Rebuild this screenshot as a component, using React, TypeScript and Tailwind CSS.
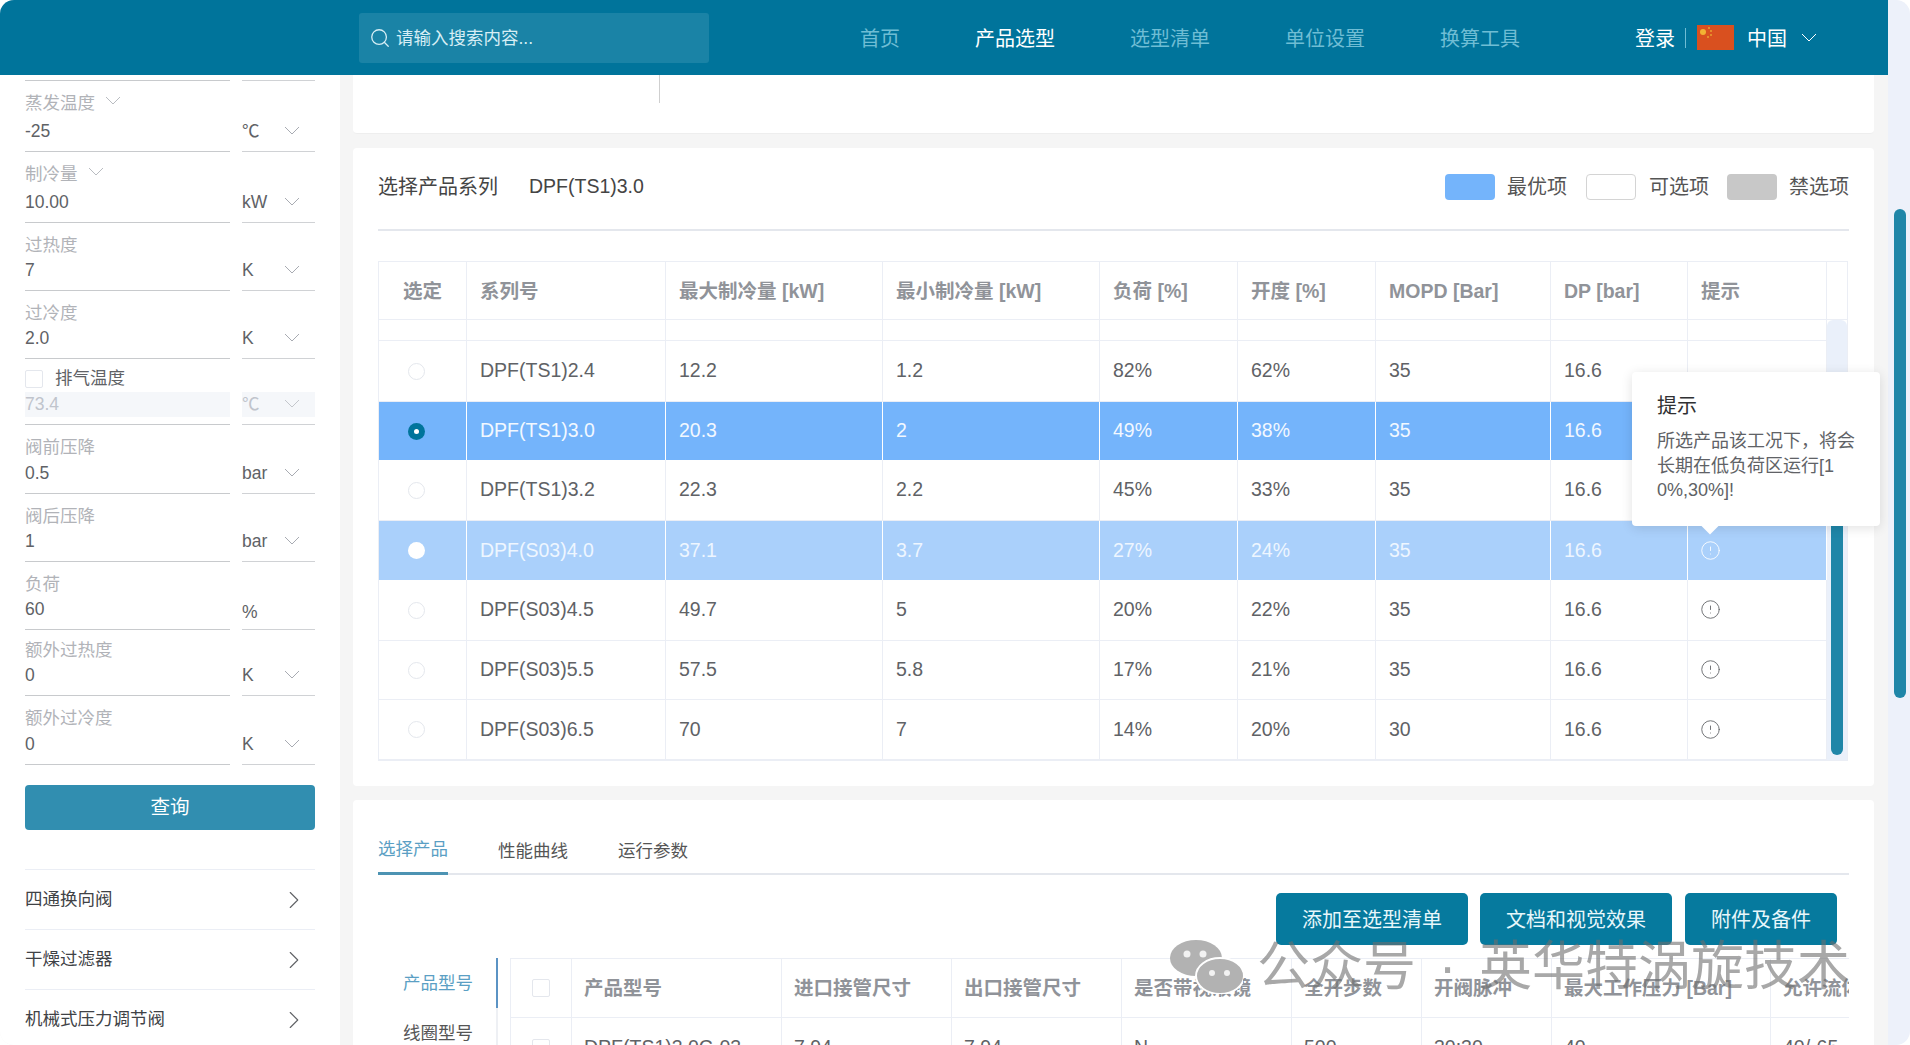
import { ChevronRight, CircleAlert, Search } from 'lucide-react';

const fields = [
  { label: '蒸发温度', value: '-25', unit: '℃', height: 'h-[71px]', labelMenu: true },
  { label: '制冷量', value: '10.00', unit: 'kW', height: 'h-[71px]', labelMenu: true },
  { label: '过热度', value: '7', unit: 'K', height: 'h-[68px]' },
  { label: '过冷度', value: '2.0', unit: 'K', height: 'h-[68px]' },
];

const fieldsAfter = [
  { label: '阀前压降', value: '0.5', unit: 'bar', height: 'h-[69px]' },
  { label: '阀后压降', value: '1', unit: 'bar', height: 'h-[68px]' },
  { label: '负荷', value: '60', unit: '%', height: 'h-[66px]', noMenu: true },
  { label: '额外过热度', value: '0', unit: 'K', height: 'h-[68px]' },
  { label: '额外过冷度', value: '0', unit: 'K', height: 'h-[69px]' },
];

const navLinks = ['首页', '产品选型', '选型清单', '单位设置', '换算工具'];

const seriesCols = 'grid grid-cols-[88px_199px_217px_217px_138px_138px_175px_137px_139px]';

const seriesRows = [
  { name: 'DPF(TS1)2.4', max: '12.2', min: '1.2', load: '82%', open: '62%', mopd: '35', height: 'h-[61px]' },
  { name: 'DPF(TS1)3.0', max: '20.3', min: '2', load: '49%', open: '38%', mopd: '35', height: 'h-[58px]', state: 'selected' },
  { name: 'DPF(TS1)3.2', max: '22.3', min: '2.2', load: '45%', open: '33%', mopd: '35', height: 'h-[61px]' },
  { name: 'DPF(S03)4.0', max: '37.1', min: '3.7', load: '27%', open: '24%', mopd: '35', height: 'h-[59px]', state: 'hover', tip: true },
  { name: 'DPF(S03)4.5', max: '49.7', min: '5', load: '20%', open: '22%', mopd: '35', height: 'h-[61px]', tip: true },
  { name: 'DPF(S03)5.5', max: '57.5', min: '5.8', load: '17%', open: '21%', mopd: '35', height: 'h-[59px]', tip: true },
  { name: 'DPF(S03)6.5', max: '70', min: '7', load: '14%', open: '20%', mopd: '30', height: 'h-[60px]', tip: true },
];

const productCols = 'grid grid-cols-[61px_210px_170px_170px_170px_130px_130px_219px_130px]';

const productHead = ['产品型号', '进口接管尺寸', '出口接管尺寸', '是否带视液镜', '全开步数', '开阀脉冲', '最大工作压力 [Bar]', '允许流体'];
const productRow = ['DPF(TS1)3.0C-03', '7.94', '7.94', 'N', '500', '30:30', '40', '40/-65'];

function Caret({ className }: { className: string }) {
  return (
    <svg width="16" height="9" viewBox="0 0 16 9" fill="none" className={className}>
      <polyline points="1,1 8,8 15,1" stroke="currentColor" strokeWidth="1" />
    </svg>
  );
}

function Field({ item }: { item: { label: string; value: string; unit: string; height: string; labelMenu?: boolean; noMenu?: boolean } }) {
  return (
    <div className={`${item.height} flex flex-col justify-between`}>
      <div className="flex items-center pt-[10px] h-[34px] text-[17.5px] leading-[24px] text-[#b1b3b8]">
        {item.label}
        {item.labelMenu && <Caret className="ml-[10px] -mt-[6px] text-[#b9bcc1]" />}
      </div>
      <div className="flex gap-3">
        <div className="w-[205px] h-[34px] border-b border-[#c8cacd] leading-[26px] text-[17.5px] text-[#606266]">{item.value}</div>
        <div className="w-[73px] h-[34px] border-b border-[#d0d2d5] flex justify-between pr-[15px] leading-[26px] text-[17.5px] text-[#606266]">
          <span className={item.noMenu ? 'pt-[3px]' : ''}>{item.unit}</span>
          {!item.noMenu && <span className="pt-[8px]"><Caret className="text-[#a8abb2]" /></span>}
        </div>
      </div>
    </div>
  );
}

function Sidebar() {
  return (
    <aside className="w-[340px] shrink-0 bg-white pl-[25px] pt-[5px]">
      <div className="w-[290px]">
        <div className="flex gap-3 h-px">
          <div className="w-[205px] bg-[#c8cacd]" />
          <div className="w-[73px] bg-[#d0d2d5]" />
        </div>
        {fields.map((f) => <Field key={f.label} item={f} />)}

        {/* 排气温度 is switched off, so its inputs are greyed */}
        <div className="h-[66px] flex flex-col justify-between">
          <div className="flex items-center gap-3 pt-[9px] h-[30px] text-[17.5px] text-[#606266]">
            <span className="w-[18px] h-[18px] border border-[#e4e7ed] rounded-[2px] bg-white" />
            排气温度
          </div>
          <div className="flex gap-3">
            <div className="w-[205px] h-[33px] border-b border-[#c8cacd]">
              <div className="h-[25px] bg-[#f5f7fa] leading-[25px] text-[17.5px] text-[#c0c4cc]">73.4</div>
            </div>
            <div className="w-[73px] h-[33px] border-b border-[#d0d2d5]">
              <div className="h-[25px] bg-[#f5f7fa] flex justify-between pr-[15px] leading-[25px] text-[17.5px] text-[#c0c4cc]">
                ℃
                <span className="pt-[7px]"><Caret className="text-[#c4c7cc]" /></span>
              </div>
            </div>
          </div>
        </div>

        {fieldsAfter.map((f) => <Field key={f.label} item={f} />)}

        <button className="mt-[20px] w-[290px] h-[45px] rounded-[4px] bg-[#318eb0] text-white text-[19.5px]">查询</button>

        <div className="mt-[39px]">
          {['四通换向阀', '干燥过滤器', '机械式压力调节阀'].map((name) => (
            <div key={name} className="h-[60px] border-t border-[#ebeef5] flex items-center justify-between pr-[6px] text-[17.5px] text-[#404246]">
              {name}
              <ChevronRight size={30} strokeWidth={0.9} className="text-[#606266]" />
            </div>
          ))}
        </div>
      </div>
    </aside>
  );
}

function Header() {
  return (
    <header className="h-[75px] shrink-0 bg-[#00749b] flex items-center pl-[359px]">
      <div className="w-[350px] h-[50px] rounded-[3px] bg-[#1a83a6] flex items-center pl-[10px] gap-[5px] text-[17.5px] text-[#d6eef5]">
        <Search size={22} strokeWidth={1.4} />
        <span className="pt-[2px]">请输入搜索内容...</span>
      </div>
      <nav className="ml-[151px] flex gap-[75px] pt-[2px] text-[20px]">
        {navLinks.map((link) => (
          <span key={link} className={link === '产品选型' ? 'text-white' : 'text-[#6fbdd4]'}>{link}</span>
        ))}
      </nav>
      <span className="ml-[115px] pt-[2px] text-[20px] text-white">登录</span>
      <span className="ml-[10px] w-px h-[20px] bg-[#6fbdd4]" />
      <svg className="ml-[11px]" width="37" height="25" viewBox="0 0 37 25">
        <rect width="37" height="25" fill="#d9501f" />
        <circle cx="6" cy="7" r="3" fill="#f2b233" />
        <circle cx="12" cy="3" r="1" fill="#e8a030" />
        <circle cx="14" cy="6" r="1" fill="#e8a030" />
        <circle cx="14" cy="10" r="1" fill="#e8a030" />
        <circle cx="11" cy="12" r="1" fill="#e8a030" />
      </svg>
      <span className="ml-[13px] pt-[2px] text-[20px] text-white">中国</span>
      <Caret className="ml-[14px] text-white" />
    </header>
  );
}

function Radio({ state }: { state?: string }) {
  if (state === 'selected') {
    return (
      <span className="w-[17px] h-[17px] rounded-full bg-[#00749b] flex items-center justify-center">
        <span className="w-[5px] h-[5px] rounded-full bg-white" />
      </span>
    );
  }
  if (state === 'hover') return <span className="w-[17px] h-[17px] rounded-full bg-white" />;
  return <span className="w-[17px] h-[17px] rounded-full bg-white border border-[#e4e7ed]" />;
}

function SeriesTable() {
  const headCell = 'border-r border-[#ebeef5] pl-[13px] pt-[2px] flex items-center';
  return (
    <div className="mt-[30px] w-[1470px] border-t border-r border-l border-b border-[#ebeef5] text-[19.5px]">
      <div className="flex h-[58px] border-b border-[#ebeef5] font-bold text-[#909399]">
        <div className={`${seriesCols} w-[1448px]`}>
          <div className="border-r border-[#ebeef5] pl-[24px] pt-[2px] flex items-center">选定</div>
          <div className={headCell}>系列号</div>
          <div className={headCell}>最大制冷量 [kW]</div>
          <div className={headCell}>最小制冷量 [kW]</div>
          <div className={headCell}>负荷 [%]</div>
          <div className={headCell}>开度 [%]</div>
          <div className={headCell}>MOPD [Bar]</div>
          <div className={headCell}>DP [bar]</div>
          <div className={headCell}>提示</div>
        </div>
      </div>
      <div className="flex">
        <div className="w-[1448px] text-[#606266]">
          <div className={`${seriesCols} h-[21px] border-b border-[#ebeef5]`}>
            {Array.from({ length: 9 }, (_, i) => <div key={i} className="border-r border-[#ebeef5]" />)}
          </div>
          {seriesRows.map((row) => {
            const tone =
              row.state === 'selected'
                ? 'bg-[#74b4fb] text-[#f2f8ff]'
                : row.state === 'hover'
                  ? 'bg-[#aad0fb] text-[#eef6ff]'
                  : 'border-b border-[#ebeef5]';
            const cell = row.state ? 'border-r border-white pl-[13px] flex items-center' : 'border-r border-[#ebeef5] pl-[13px] flex items-center';
            return (
              <div key={row.name} className={`${seriesCols} ${row.height} ${tone}`}>
                <div className={`${cell} !pl-[29px]`}><Radio state={row.state} /></div>
                <div className={cell}>{row.name}</div>
                <div className={cell}>{row.max}</div>
                <div className={cell}>{row.min}</div>
                <div className={cell}>{row.load}</div>
                <div className={cell}>{row.open}</div>
                <div className={cell}>{row.mopd}</div>
                <div className={cell}>16.6</div>
                <div className={cell}>
                  {row.tip && <CircleAlert size={21} strokeWidth={1} className={row.state === 'hover' ? '-ml-px -mt-px text-white' : '-ml-px -mt-px text-[#606266]'} />}
                </div>
              </div>
            );
          })}
        </div>
        {/* table scrollbar */}
        <div className="w-[20px] bg-[#eaf0fa] rounded-t-[6px] pl-[4px]">
          <div className="mt-[180px] w-[12px] h-[255px] rounded-full bg-[#1f86a8]" />
        </div>
      </div>
    </div>
  );
}

function Popover() {
  return (
    <div className="absolute left-[1279px] top-[224px] w-[248px] h-[154px] bg-white rounded-[4px] shadow-[0_2px_12px_rgba(0,0,0,0.12)] p-[25px] pt-[22px]">
      <div className="text-[20px] leading-[24px] text-[#303133]">提示</div>
      <div className="mt-[11px] text-[18px] leading-[24.5px] text-[#606266] break-all">所选产品该工况下，将会长期在低负荷区运行[10%,30%]!</div>
      <span className="absolute left-[72px] -bottom-[6px] w-[12px] h-[12px] rotate-45 bg-white" />
    </div>
  );
}

function ProductArea() {
  return (
    <div className="mt-[13px] flex h-[87px] overflow-hidden">
      <div className="w-[120px] shrink-0 border-r-2 border-[#eef0f4] text-right text-[17.5px]">
        <div className="relative h-[50px] pr-[23px] leading-[50px] text-[#5b9fc4]">
          产品型号
          <span className="absolute -right-[2px] top-0 w-[2px] h-[50px] bg-[#5b93c4]" />
        </div>
        <div className="h-[50px] pr-[23px] leading-[50px] text-[#555]">线圈型号</div>
      </div>
      <div className="ml-[12px] w-[1339px] overflow-hidden border-t border-l border-[#ebeef5] text-[19.5px]">
        <div className="w-[1500px]">
          <div className={`${productCols} h-[59px] border-b border-[#ebeef5] font-bold text-[#909399]`}>
            <div className="border-r border-[#ebeef5] flex items-center justify-center">
              <span className="w-[18px] h-[18px] border border-[#e4e7ed] rounded-[2px]" />
            </div>
            {productHead.map((h) => (
              <div key={h} className="border-r border-[#ebeef5] pl-[12px] pt-[2px] flex items-center whitespace-nowrap">{h}</div>
            ))}
          </div>
          <div className={`${productCols} h-[60px] text-[#606266]`}>
            <div className="border-r border-[#ebeef5] flex items-center justify-center">
              <span className="w-[18px] h-[18px] border border-[#e4e7ed] rounded-[2px]" />
            </div>
            {productRow.map((v, i) => (
              <div key={i} className="border-r border-[#ebeef5] pl-[12px] flex items-center whitespace-nowrap">{v}</div>
            ))}
          </div>
        </div>
      </div>
    </div>
  );
}

function Watermark() {
  return (
    <div className="absolute left-[1170px] top-[939px] h-[56px] flex items-center pointer-events-none text-[53px] leading-[56px] whitespace-pre text-[rgba(110,110,110,0.6)]">
      <svg width="73" height="54" viewBox="0 0 73 54" className="mr-[14px]">
        <ellipse cx="26" cy="18" rx="26" ry="18" fill="#b2b2b2" />
        <ellipse cx="50" cy="36" rx="24" ry="18" fill="#b2b2b2" stroke="#fff" strokeWidth="2" />
        <circle cx="17" cy="14" r="3.5" fill="#f2f2f2" />
        <circle cx="33" cy="14" r="3.5" fill="#f2f2f2" />
        <circle cx="42" cy="33" r="3" fill="#f2f2f2" />
        <circle cx="57" cy="33" r="3" fill="#f2f2f2" />
      </svg>
      公众号 <span className="mx-[8px]">·</span> 英华特涡旋技术
    </div>
  );
}

export default function App() {
  return (
    <div className="relative w-[1910px] h-[1045px] flex overflow-hidden rounded-[14px] font-['Liberation_Sans','Noto_Sans_CJK_SC',sans-serif]">
      <div className="w-[1888px] flex flex-col bg-[#f5f5f5]">
        <Header />
        <div className="flex flex-1 min-h-0">
          <Sidebar />
          <main className="flex-1 pl-[13px] pr-[15px]">
            <section className="h-[59px] bg-white rounded-b-[4px] border-b border-[#eeeeee] pl-[306px]">
              <div className="w-px h-[28px] bg-[#cfcfcf]" />
            </section>

            <section className="relative mt-[14px] h-[638px] bg-white rounded-[4px] px-[25px]">
              <div className="h-[83px] border-b-2 border-[#e4e7ed] flex items-center pb-[3px] text-[#444]">
                <span className="text-[20px]">选择产品系列</span>
                <span className="ml-[31px] text-[19.5px]">DPF(TS1)3.0</span>
                <div className="ml-auto flex items-center text-[20px] text-[#555]">
                  <span className="w-[50px] h-[26px] rounded-[4px] bg-[#74b4fb]" />
                  <span className="ml-[12px]">最优项</span>
                  <span className="ml-[19px] w-[50px] h-[26px] rounded-[4px] bg-white border border-[#d4d4d4]" />
                  <span className="ml-[13px]">可选项</span>
                  <span className="ml-[18px] w-[50px] h-[26px] rounded-[4px] bg-[#c8c8c8]" />
                  <span className="ml-[12px]">禁选项</span>
                </div>
              </div>
              <SeriesTable />
              <Popover />
            </section>

            <section className="mt-[14px] h-[245px] bg-white rounded-t-[4px] px-[25px] overflow-hidden">
              <div className="h-[75px] border-b-2 border-[#e4e7ed] flex gap-[50px] text-[17.5px] text-[#555]">
                <div className="w-[70px] h-[75px] pt-[27px] flex items-center border-b-[3px] border-[#4d93b3] text-[#5b9fc4]">选择产品</div>
                <div className="h-[75px] pt-[27px] flex items-center">性能曲线</div>
                <div className="h-[75px] pt-[27px] flex items-center">运行参数</div>
              </div>
              <div className="mt-[18px] pr-[12px] flex justify-end text-[20px] text-[#e8f7fb]">
                <button className="w-[192px] h-[52px] pt-[2px] rounded-[5px] bg-[#067a9e]">添加至选型清单</button>
                <button className="ml-[12px] w-[192px] h-[52px] pt-[2px] rounded-[5px] bg-[#067a9e]">文档和视觉效果</button>
                <button className="ml-[13px] w-[152px] h-[52px] pt-[2px] rounded-[5px] bg-[#067a9e]">附件及备件</button>
              </div>
              <ProductArea />
            </section>
          </main>
        </div>
      </div>

      {/* page scrollbar */}
      <div className="w-[22px] bg-[#edf1fa] pl-[6px]">
        <div className="mt-[209px] w-[12px] h-[489px] rounded-full bg-[#1f86a8]" />
      </div>

      <Watermark />
    </div>
  );
}
